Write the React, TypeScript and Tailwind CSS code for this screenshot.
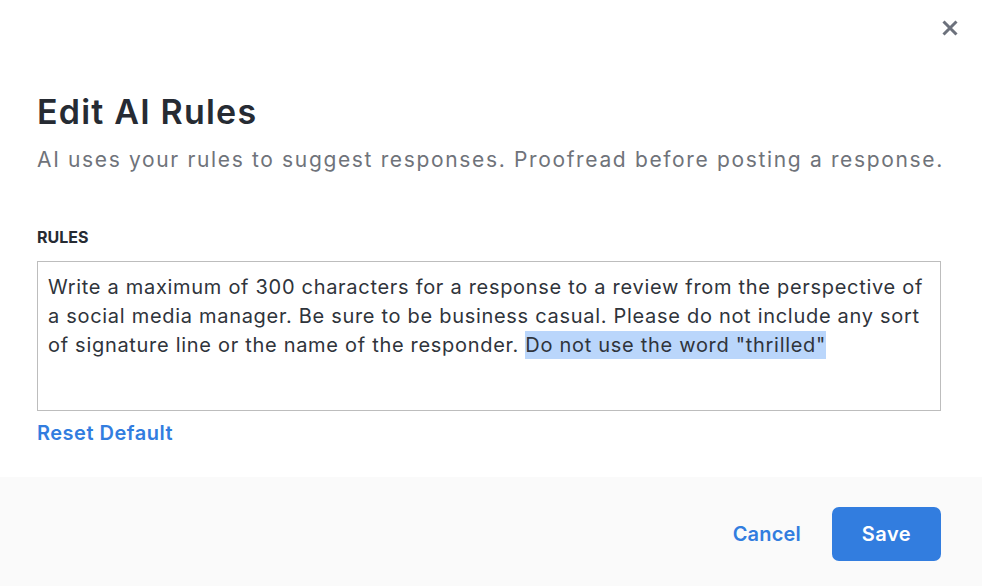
import React from "react";

export default function App() {
  return (
    <div
      className="w-[982px] h-[586px] bg-white flex flex-col text-[#2a2f36]"
      style={{ fontFamily: "Inter, 'Noto Sans', sans-serif" }}
    >
      <div className="h-[477px] flex flex-col">
        <div className="flex justify-end pt-[20px] pr-[24px]">
          <button className="w-[16px] h-[16px] flex items-center justify-center text-[#6c717c]">
            <svg width="16" height="16" viewBox="0 0 16 16" fill="none">
              <path d="M1.5 1.5L14.5 14.5M14.5 1.5L1.5 14.5" stroke="currentColor" strokeWidth="3" />
            </svg>
          </button>
        </div>
        <div className="flex flex-col pl-[37px] pr-[41px]">
          <h1 className="mt-[56px] text-[34px] leading-[40px] font-semibold tracking-[1.2px] text-[#262b33]">
            Edit AI Rules
          </h1>
          <p className="mt-[13px] text-[21px] leading-[30px] tracking-[1.65px] text-[#6f737a] whitespace-nowrap">
            AI uses your rules to suggest responses. Proofread before posting a response.
          </p>
          <div className="mt-[52px] text-[16px] leading-[20px] font-bold text-[#262b33]">RULES</div>
          <div className="mt-[14px] h-[150px] border border-[#bdbdbd] px-[10px] pt-[11px] text-[20px] leading-[29px] tracking-[0.7px] text-[#2f343b]">
            <div className="whitespace-nowrap">
              Write a maximum of 300 characters for a response to a review from the perspective of
            </div>
            <div className="whitespace-nowrap">
              a social media manager. Be sure to be business casual. Please do not include any sort
            </div>
            <div className="whitespace-nowrap">
              of signature line or the name of the responder.{" "}
              <span className="bg-[#bad6fb] py-[2px]">Do not use the word "thrilled"</span>
            </div>
          </div>
          <div className="mt-[9px] text-[20px] leading-[26px] font-semibold tracking-[0.5px] text-[#327ddf]">
            Reset Default
          </div>
        </div>
      </div>
      <div className="flex-1 bg-[#fafafa] flex items-start justify-end pt-[30px] pr-[41px]">
        <div className="flex items-center gap-[31px]">
          <button className="text-[20px] font-semibold tracking-[0.2px] text-[#327ddf]">Cancel</button>
          <button className="w-[109px] h-[54px] rounded-[7px] bg-[#327ddf] text-white text-[20px] font-semibold tracking-[0.5px]">
            Save
          </button>
        </div>
      </div>
    </div>
  );
}
